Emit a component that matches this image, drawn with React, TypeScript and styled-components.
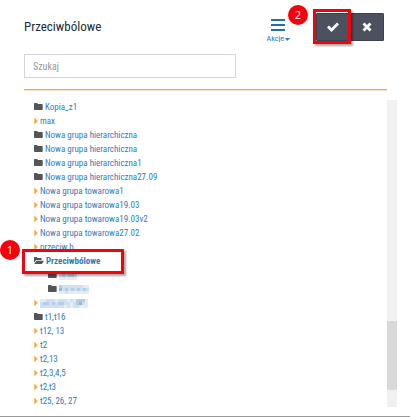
import React from "react";
import styled, { createGlobalStyle } from "styled-components";

const Global = createGlobalStyle`
  *, *::before, *::after { box-sizing: border-box; }
  body { margin: 0; background: #fff; font-family: "Roboto Condensed", Roboto, sans-serif; }
`;

const Panel = styled.main`
  display: flex;
  flex-direction: column;
  padding: 0 13px 8px 24px;
  border-bottom: 1px solid #999;
`;

const Header = styled.header`
  display: flex;
  align-items: center;
  height: 54px;
  padding-right: 13px;
`;

const Title = styled.h1`
  flex: 1;
  margin: 0;
  font-size: 13px;
  line-height: 16px;
  font-weight: 400;
  color: #222d35;
`;

const ActionsButton = styled.button`
  display: flex;
  flex-direction: column;
  align-items: center;
  gap: 4px;
  margin-right: 26px;
  padding: 8px 0 0;
  border: 0;
  background: none;
  font: 8px/8px "Roboto Condensed", Roboto, sans-serif;
  color: #2f78b7;
`;

const ActionsLabel = styled.span`
  display: flex;
  align-items: center;
  gap: 1px;
`;

const ButtonGroup = styled.div`
  position: relative;
  display: flex;
`;

const DarkButton = styled.button`
  display: grid;
  place-items: center;
  width: 34px;
  height: 28px;
  padding: 0;
  border: 1px solid #3d424f;
  border-radius: 1px;
  background: #4c515f;
`;

const SearchInput = styled.input`
  width: 58%;
  max-width: 212px;
  height: 24px;
  padding: 0 8px;
  border: 1px solid #d3d5de;
  border-radius: 0;
  font: 10px/12px "Roboto Condensed", Roboto, sans-serif;
  color: #333;
  &::placeholder { color: #999; }
`;

const Divider = styled.hr`
  height: 2px;
  margin: 11px 10px 9px 0;
  border: 0;
  border-top: 1px solid #f9a33c;
  background: #fde3c4;
`;

const ScrollArea = styled.section`
  display: flex;
`;

const Tree = styled.ul`
  flex: 1;
  margin: 0;
  padding: 0 0 0 10px;
  list-style: none;
`;

const Item = styled.li<{ $depth: number }>`
  position: relative;
  display: flex;
  align-items: center;
  gap: 2px;
  height: 14px;
  padding-left: ${(p) => p.$depth * 14}px;
`;

const ItemLink = styled.a<{ $strong?: boolean }>`
  font-size: 9px;
  line-height: 14px;
  font-weight: ${(p) => (p.$strong ? 700 : 400)};
  color: #337ab7;
  text-decoration: none;
  white-space: nowrap;
`;

const Track = styled.div`
  display: flex;
  flex-direction: column;
  width: 10px;
  margin-bottom: 1px;
  padding-bottom: 17px;
  background: #f1f1f1;
`;

const Thumb = styled.div`
  height: 69px;
  margin-top: auto;
  background: #d8d8d8;
`;

const Frame = styled.span<{ $kind: "button" | "row" }>`
  position: absolute;
  pointer-events: none;
  border: 3px solid #f5000c;
  box-shadow: 2px 2px 2px rgba(0, 0, 0, 0.35);
  ${(p) =>
    p.$kind === "button"
      ? "left: -3px; top: -4px; width: 38px; height: 35px;"
      : "left: -12px; top: -5px; width: 102px; height: 25px; z-index: 1;"}
`;

const Badge = styled.span<{ $kind: "button" | "row" }>`
  position: absolute;
  z-index: 2;
  display: grid;
  place-items: center;
  width: 20px;
  height: 20px;
  border-radius: 50%;
  background: #f5000c;
  color: #fff;
  font: 11px/20px "Open Sans", sans-serif;
  ${(p) => (p.$kind === "button" ? "left: -28px; top: -8px;" : "left: -34px; top: -14px;")}
`;

const Folder = () => (
  <svg width="9" height="8" viewBox="0 0 9 8" aria-hidden="true">
    <path d="M0 .7Q0 0 .7 0H3Q3.6 0 3.7 1H8Q8.7 1 8.7 1.7V6.3Q8.7 7 8 7H.7Q0 7 0 6.3Z" fill="#555" />
  </svg>
);

const OpenFolder = () => (
  <svg width="10" height="8" viewBox="0 0 10 8" aria-hidden="true">
    <path d="M0 5.6V.7Q0 0 .7 0H2.7Q3.3 0 3.4 1H6.9Q7.6 1 7.6 1.7V3H2.7Q2 3 1.5 3.7ZM.3 7 2 4.2Q2.3 3.7 2.9 3.7H9.4Q10 3.7 9.7 4.2L8.3 6.5Q8 7 7.4 7Z" fill="#555" />
  </svg>
);

const Arrow = () => (
  <svg width="4" height="8" viewBox="0 0 4 8" aria-hidden="true">
    <path d="M.3.5 3.7 4 .3 7.5Z" fill="#f9a33c" />
  </svg>
);

const tones = ["#fff", "#e4edf6", "#cfe0ef", "#b4cde5", "#94b8da"];

const MosaicSvg = styled.svg`
  display: block;
`;

const Mosaic = ({ rows }: { rows: string[] }) => (
  <MosaicSvg width={rows[0].length * 3} height={rows.length * 3} shapeRendering="crispEdges" aria-hidden="true">
    {rows.flatMap((row, y) =>
      [...row].map((tone, x) => (
        <rect key={`${x}-${y}`} x={x * 3} y={y * 3} width="3" height="3" fill={tones[Number(tone)]} />
      ))
    )}
  </MosaicSvg>
);

type Node = { icon: "folder" | "open" | "arrow"; label?: string; mosaic?: string[]; depth?: number };

const nodes: Node[] = [
  { icon: "folder", label: "Kopia_z1" },
  { icon: "arrow", label: "max" },
  { icon: "folder", label: "Nowa grupa hierarchiczna" },
  { icon: "folder", label: "Nowa grupa hierarchiczna" },
  { icon: "folder", label: "Nowa grupa hierarchiczna1" },
  { icon: "folder", label: "Nowa grupa hierarchiczna27.09" },
  { icon: "arrow", label: "Nowa grupa towarowa1" },
  { icon: "arrow", label: "Nowa grupa towarowa19.03" },
  { icon: "arrow", label: "Nowa grupa towarowa19.03v2" },
  { icon: "arrow", label: "Nowa grupa towarowa27.02" },
  { icon: "arrow", label: "przeciw.b" },
  { icon: "open", label: "Przeciwbólowe" },
  { icon: "folder", depth: 1, mosaic: ["334343", "232332", "111111"] },
  { icon: "folder", depth: 1, mosaic: ["3222222211", "4232323232", "1121111111"] },
  { icon: "arrow", mosaic: ["1122212221213331", "2332323322123421", "2222222212122111"] },
  { icon: "folder", label: "t1,t16" },
  { icon: "arrow", label: "t12, 13" },
  { icon: "arrow", label: "t2" },
  { icon: "arrow", label: "t2,13" },
  { icon: "arrow", label: "t2,3,4,5" },
  { icon: "arrow", label: "t2,t3" },
  { icon: "arrow", label: "t25, 26, 27" },
];

const icons = { folder: Folder, open: OpenFolder, arrow: Arrow };

export default function App() {
  return (
    <>
      <Global />
      <Panel>
        <Header>
          <Title>Przeciwbólowe</Title>
          <ActionsButton type="button">
            <svg width="14" height="12" aria-hidden="true">
              <path d="M0 1H14M0 6H14M0 11H14" stroke="#216fad" strokeWidth="2" />
            </svg>
            <ActionsLabel>
              Akcje
              <svg width="5" height="3" aria-hidden="true"><path d="M0 0H5L2.5 3Z" fill="#2f78b7" /></svg>
            </ActionsLabel>
          </ActionsButton>
          <ButtonGroup>
            <DarkButton type="button" aria-label="Zatwierdź">
              <svg width="12" height="10" viewBox="0 0 12 10"><path d="M1 4.5 4.5 8 11 1.5" fill="none" stroke="#fff" strokeWidth="2.8" /></svg>
            </DarkButton>
            <DarkButton type="button" aria-label="Zamknij">
              <svg width="10" height="10" viewBox="0 0 10 10"><path d="M1.5 1.5 8.5 8.5M8.5 1.5 1.5 8.5" stroke="#fff" strokeWidth="2.8" /></svg>
            </DarkButton>
            <Frame $kind="button" />
            <Badge $kind="button">2</Badge>
          </ButtonGroup>
        </Header>
        <SearchInput type="search" placeholder="Szukaj" aria-label="Szukaj" />
        <Divider />
        <ScrollArea>
          <Tree>
            {nodes.map((node, i) => {
              const Icon = icons[node.icon];
              const open = node.icon === "open";
              return (
                <Item key={i} $depth={node.depth ?? 0}>
                  <Icon />
                  <ItemLink href="#" $strong={open} aria-label={node.label ?? "Grupa"}>
                    {node.label}
                    {node.mosaic && <Mosaic rows={node.mosaic} />}
                  </ItemLink>
                  {open && (
                    <>
                      <Frame $kind="row" />
                      <Badge $kind="row">1</Badge>
                    </>
                  )}
                </Item>
              );
            })}
          </Tree>
          <Track>
            <Thumb />
          </Track>
        </ScrollArea>
      </Panel>
    </>
  );
}
